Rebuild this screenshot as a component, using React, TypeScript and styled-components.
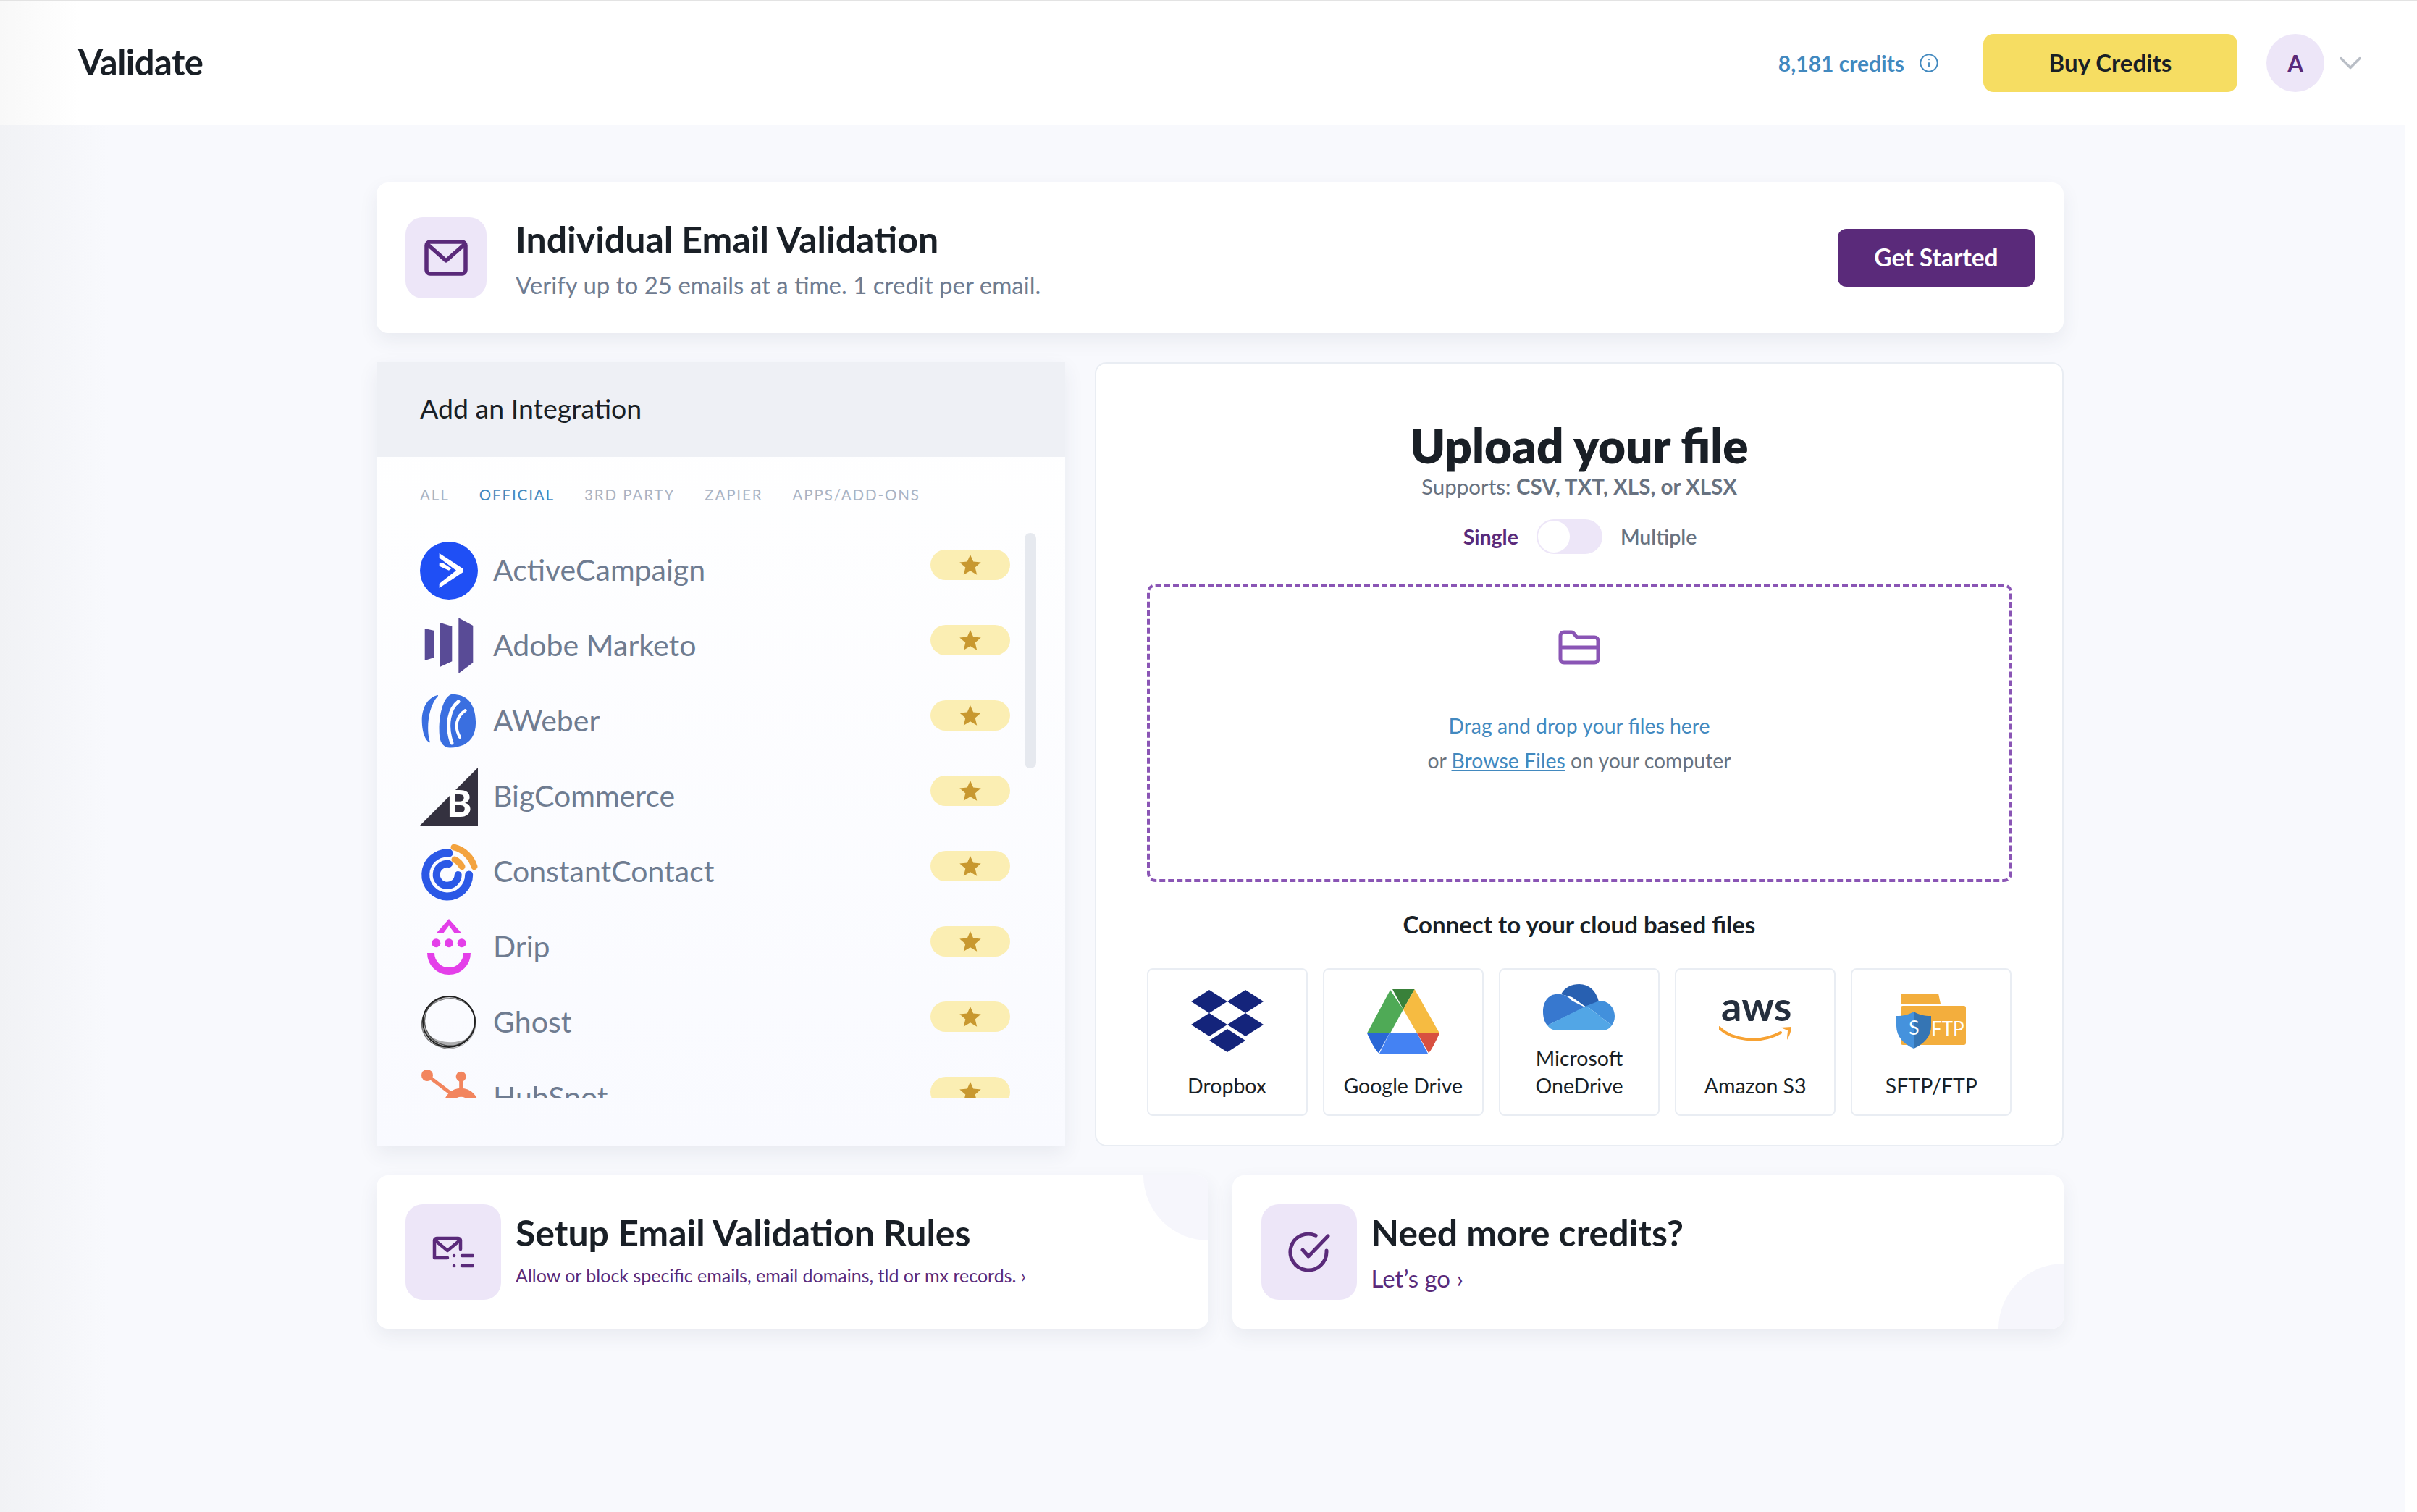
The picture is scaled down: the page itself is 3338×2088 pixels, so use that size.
import React from "react";
import styled, { createGlobalStyle } from "styled-components";
import { Info, ChevronDown } from "lucide-react";

const GlobalStyle = createGlobalStyle`
  html, body {
    margin: 0;
    padding: 0;
    background: #fff;
    font-family: "Lato", "Open Sans", sans-serif;
    color: #191f26;
  }
  * { box-sizing: border-box; }
`;

const Shell = styled.div`
  width: 3338px;
  height: 2088px;
  overflow: hidden;
  display: flex;
  flex-direction: column;
`;

const Header = styled.header`
  height: 172px;
  flex: none;
  border-top: 2px solid #e3e3e3;
  background: linear-gradient(90deg, #f8f8f8 0, #fff 110px);
  display: flex;
  align-items: center;
  padding: 0 66px 0 108px;
`;

const Brand = styled.div`
  font-size: 49px;
  font-weight: 700;
  letter-spacing: -0.5px;
  flex: 1;
  padding-bottom: 4px;
`;

const Credits = styled.div`
  display: flex;
  align-items: center;
  gap: 20px;
  color: #4289bf;
  font-size: 30px;
  font-weight: 700;
  margin-right: 61px;
  line-height: 36px;
`;

const BuyButton = styled.button`
  width: 351px;
  height: 80px;
  padding-bottom: 4px;
  border: 0;
  border-radius: 14px;
  background: #f6dd62;
  color: #191f26;
  font: 700 33px "Lato", sans-serif;
`;

const Avatar = styled.div`
  width: 80px;
  height: 80px;
  border-radius: 50%;
  margin-left: 40px;
  background: #ede6f8;
  color: #5a2a7a;
  display: flex;
  align-items: center;
  justify-content: center;
  font-size: 32px;
  font-weight: 700;
`;

const Caret = styled(ChevronDown)`
  margin-left: 10px;
  color: #b9bec6;
`;

const Main = styled.main`
  flex: 1;
  margin-right: 16px;
  padding: 80px 0 0 520px;
  background: linear-gradient(90deg, #f1f2f5 0, #f8f9fd 150px);
  display: flex;
  flex-direction: column;
  gap: 40px;
`;

const Card = styled.section`
  position: relative;
  overflow: hidden;
  background: #fff;
  border-radius: 16px;
  box-shadow: 0 10px 26px rgba(50, 60, 90, 0.08);
  display: flex;
  align-items: flex-start;
`;

const TopCard = styled(Card)`
  width: 2330px;
  height: 208px;
  padding: 48px 40px;
`;

const IconTile = styled.div<{ $size: number }>`
  width: ${(p) => p.$size}px;
  height: ${(p) => p.$size}px;
  flex: none;
  border-radius: 24px;
  background: #ede6f8;
  display: flex;
  align-items: center;
  justify-content: center;
  margin-right: ${(p) => (p.$size > 120 ? 20 : 40)}px;
`;

const CardText = styled.div<{ $top: number }>`
  flex: 1;
  margin-top: ${(p) => p.$top}px;
  position: relative;
`;

const CardTitle = styled.h2`
  margin: 0;
  font-size: 50px;
  line-height: 58px;
  font-weight: 700;
  color: #191f26;
`;

const TopSub = styled.p`
  margin: 14px 0 0;
  font-size: 33px;
  line-height: 40px;
  color: #6f7c91;
`;

const PurpleButton = styled.button`
  width: 272px;
  height: 80px;
  margin-top: 16px;
  padding-bottom: 4px;
  border: 0;
  border-radius: 12px;
  background: #5a2a7a;
  color: #fff;
  font: 700 33.500px "Lato", sans-serif;
`;

const MiddleRow = styled.div`
  display: flex;
  gap: 41px;
  width: 2330px;
  height: 1083px;
`;

const IntegrationPanel = styled.section`
  width: 951px;
  flex: none;
  background: linear-gradient(180deg, #fff 0, #f9faff 100%);
  box-shadow: 0 10px 26px rgba(50, 60, 90, 0.08);
`;

const PanelHead = styled.div`
  height: 131px;
  padding: 0 0 4px 60px;
  background: #eef0f5;
  display: flex;
  align-items: center;
  font-size: 37.500px;
  color: #191f26;
`;

const Tabs = styled.div`
  display: flex;
  gap: 41px;
  padding: 40px 0 0 60px;
  height: 64px;
  line-height: 24px;
`;

const Tab = styled.span<{ $active?: boolean }>`
  font-size: 20.500px;
  letter-spacing: 1.900px;
  color: ${(p) => (p.$active ? "#4289bf" : "#a9b3c3")};
`;

const ListWrap = styled.div`
  display: flex;
  gap: 20px;
  padding: 41px 0 0 60px;
`;

const List = styled.div`
  width: 815px;
  height: 780px;
  overflow: hidden;
`;

const Row = styled.div`
  height: 104px;
  display: flex;
  align-items: center;
  gap: 21px;
`;

const Logo = styled.svg`
  width: 80px;
  height: 80px;
  flex: none;
`;

const RowName = styled.span`
  flex: 1;
  padding-bottom: 4px;
  font-size: 41px;
  color: #6f7c91;
`;

const StarBadge = styled.div`
  width: 110px;
  height: 42px;
  margin-bottom: 16px;
  border-radius: 21px;
  background: #fbeeb3;
  display: flex;
  align-items: center;
  justify-content: center;
`;

const ScrollThumb = styled.div`
  width: 16px;
  height: 325px;
  border-radius: 8px;
  background: #e6e9ef;
`;

const UploadPanel = styled.section`
  width: 1338px;
  flex: none;
  padding-top: 78px;
  background: #fff;
  border: 2px solid #e9edf3;
  border-radius: 16px;
  display: flex;
  flex-direction: column;
  align-items: center;
`;

const UploadTitle = styled.h1`
  margin: 0;
  height: 70px;
  font-size: 65.500px;
  line-height: 70px;
  font-weight: 800;
  color: #191f26;
`;

const Supports = styled.div`
  height: 44px;
  font-size: 29.500px;
  line-height: 44px;
  color: #687280;
  b {
    font-weight: 700;
  }
`;

const ToggleRow = styled.div`
  display: flex;
  align-items: center;
  height: 48px;
  gap: 25px;
  margin-top: 23px;
  padding-left: 2px;
  font-size: 28.500px;
  line-height: 44px;
  font-weight: 600;
  color: #687280;
`;

const ActiveLabel = styled.span`
  color: #5a2a7a;
  font-weight: 700;
`;

const Toggle = styled.div`
  width: 91px;
  height: 48px;
  padding: 2px;
  border-radius: 24px;
  background: #ede6f8;
`;

const Knob = styled.div`
  width: 44px;
  height: 44px;
  border-radius: 50%;
  background: #fff;
`;

const DropZone = styled.div`
  width: 1195px;
  height: 412px;
  margin-top: 41px;
  padding-top: 60px;
  border: 4px dashed #8a55b5;
  border-radius: 12px;
  display: flex;
  flex-direction: column;
  align-items: center;
  font-size: 28.400px;
  line-height: 48px;
  color: #687280;
`;

const FolderIcon = styled.svg`
  width: 58px;
  height: 48px;
  margin-bottom: 60px;
`;

const DragLine = styled.div`
  color: #4289bf;
`;

const BrowseLink = styled.a`
  color: #4289bf;
  text-decoration: underline;
`;

const ConnectTitle = styled.div`
  margin-top: 38px;
  height: 42px;
  font-size: 33px;
  line-height: 40px;
  font-weight: 700;
  color: #191f26;
`;

const SourceGrid = styled.div`
  width: 1195px;
  margin-top: 39px;
  display: grid;
  grid-template-columns: repeat(5, 1fr);
  gap: 21px;
`;

const SourceCard = styled.div<{ $top: number }>`
  height: 204px;
  padding: ${(p) => p.$top}px 0 21px;
  border: 2px solid #e9edf3;
  border-radius: 8px;
  display: flex;
  flex-direction: column;
  align-items: center;
  justify-content: space-between;
`;

const SourceLabel = styled.div`
  font-size: 28.500px;
  line-height: 38px;
  text-align: center;
  color: #191f26;
`;

const BottomRow = styled.div`
  display: flex;
  gap: 33px;
  width: 2330px;
`;

const BottomCard = styled(Card)`
  flex: 1;
  height: 212px;
  padding: 40px;
`;

const Corner = styled.div<{ $place: "top" | "bottom" }>`
  position: absolute;
  right: -90px;
  width: 180px;
  height: 180px;
  border-radius: 50%;
  background: #f6f6fc;
  ${(p) => (p.$place === "top" ? "top: -90px;" : "bottom: -90px;")}
`;

const RuleLink = styled.p`
  margin: 12px 0 0;
  font-size: 25px;
  line-height: 36px;
  color: #5a2a7a;
`;

const GoLink = styled.p`
  margin: 14px 0 0;
  font-size: 33px;
  line-height: 40px;
  color: #5a2a7a;
`;

const Star = () => (
  <svg width="30" height="28" viewBox="0 0 30 28">
    <path
      d="M15 0l4.200 9.600 10.500.9-8 6.900 2.500 10.400L15 22.300 5.800 27.800l2.500-10.400-8-6.900 10.500-.9z"
      fill="#c8982f"
    />
  </svg>
);

const integrations: { name: string; logo: React.ReactNode }[] = [
  {
    name: "ActiveCampaign",
    logo: (
      <>
        <circle cx="40" cy="40" r="40" fill="#1f4ff5" />
        <path d="M26.700 16L59 37v5.500L26.700 64v-6L50 39.700 26.700 22.500z" fill="#fff" />
        <path d="M26.700 30.300l4-1.600L43.300 37 40 39.700 26.700 33.700z" fill="#fff" />
      </>
    ),
  },
  {
    name: "Adobe Marketo",
    logo: (
      <g fill="#594b96">
        <path d="M6.700 16L19 18.700v37.600L6.700 60z" />
        <path d="M28 8l16.300 5v48.300L28 68.700z" />
        <path d="M53.300 1.300L73.300 12v51L53.300 78z" />
      </g>
    ),
  },
  {
    name: "AWeber",
    logo: (
      <>
        <path
          d="M25 4C12 6 3 20 2.700 38c0 14 3.300 28 10.300 31 1 1 1-1 0-3C9 50 11 20 25 5z"
          fill="#3a6fe0"
        />
        <path
          d="M43 3c17-1 33 7 34 37 1 26-15 36-35 36.500C35 77 28 72 27 60 25 40 30 8 43 3z"
          fill="#3a6fe0"
        />
        <path d="M53 13c-12 9-18 32-9 57" fill="none" stroke="#fff" strokeWidth="5" strokeLinecap="round" />
        <path d="M62.700 25c-12 8-16 22-7.700 37" fill="none" stroke="#fff" strokeWidth="4" strokeLinecap="round" />
      </>
    ),
  },
  {
    name: "BigCommerce",
    logo: (
      <>
        <path d="M80 0v80H0z" fill="#34313f" />
        <text x="37" y="68" fontFamily="Lato, sans-serif" fontWeight="900" fontSize="52" fill="#fff">
          B
        </text>
      </>
    ),
  },
  {
    name: "ConstantContact",
    logo: (
      <g fill="none" strokeLinecap="round">
        <path d="M40 14A30 30 0 1 0 67.700 44" stroke="#2b58e6" strokeWidth="11" />
        <path d="M40 29A15 15 0 1 0 52.700 44" stroke="#2b58e6" strokeWidth="10" />
        <path d="M47 6A39 39 0 0 1 75 32.700" stroke="#f3a33f" strokeWidth="9" />
        <path d="M48 23A23 23 0 0 1 58 32.700" stroke="#f3a33f" strokeWidth="9" />
      </g>
    ),
  },
  {
    name: "Drip",
    logo: (
      <g fill="#e43fe9">
        <path d="M40 1l17.700 20H48l-8-10.700L32 21h-9.700z" />
        <circle cx="22.300" cy="34.300" r="6" />
        <circle cx="40" cy="34.300" r="6" />
        <circle cx="57.700" cy="34.300" r="6" />
        <path d="M15 48a25 25 0 0 0 50 0" fill="none" stroke="#e43fe9" strokeWidth="10" />
      </g>
    ),
  },
  {
    name: "Ghost",
    logo: (
      <>
        <path d="M4 32C3 54 14 72 38 77 22 68 12 60 9 50 7 44 6 38 4 32z" fill="#8a8a8a" opacity="0.5" />
        <path d="M8 54c10 18 36 26 58 8-18 8-40 8-58-8z" fill="#5f5f5f" opacity="0.5" />
        <g fill="none" stroke="#222">
          <ellipse cx="40" cy="39" rx="36" ry="35" strokeWidth="1.800" />
          <ellipse cx="41" cy="38" rx="35" ry="34" strokeWidth="1.500" transform="rotate(12 40 40)" opacity="0.7" />
          <ellipse cx="39" cy="40" rx="37" ry="33" strokeWidth="1.200" transform="rotate(-20 40 40)" opacity="0.6" />
          <ellipse cx="40" cy="41" rx="37" ry="35" strokeWidth="1" opacity="0.4" />
        </g>
      </>
    ),
  },
  {
    name: "HubSpot",
    logo: (
      <g fill="#f2855e">
        <circle cx="10" cy="9" r="8" />
        <path d="M10 9l34 26" stroke="#f2855e" strokeWidth="5" />
        <circle cx="56.700" cy="10.700" r="7" />
        <path d="M56.700 11v20" stroke="#f2855e" strokeWidth="5" />
        <circle cx="56.700" cy="50.700" r="18" fill="none" stroke="#f2855e" strokeWidth="12" />
      </g>
    ),
  },
];

const Dropbox = () => (
  <svg width="100" height="86" viewBox="0 0 100 86" fill="#14247b">
    <path d="M25 0l25 16-25 16L0 16z" />
    <path d="M75 0l25 16-25 16-25-16z" />
    <path d="M25 32l25 16-25 16L0 48z" />
    <path d="M75 32l25 16-25 16-25-16z" />
    <path d="M50 54l25 16-25 16-25-16z" />
  </svg>
);

const GoogleDrive = () => (
  <svg width="100" height="89" viewBox="0 0 100 89">
    <path d="M32 1L50 28 32 60.700H0z" fill="#4faa56" />
    <path d="M35 0h30.600L50 28z" fill="#39813a" />
    <path d="M65.600 0L100 60.700H69L50 28z" fill="#f6bb41" />
    <path d="M31 60.700h38L84 89H17z" fill="#4482f3" />
    <path d="M0 60.700h31L16 88C12 86 3 68 0 60.700z" fill="#2a67d6" />
    <path d="M69 60.700h31C97 68 88 86 85 88z" fill="#d85040" />
  </svg>
);

const OneDrive = () => (
  <svg width="100" height="64" viewBox="0 0 100 64">
    <path d="M25 14C30 4 40 0 50 0c14 0 23 9 27 24l-17 8-20-14z" fill="#2860b1" />
    <path d="M0 38C0 22 10 14 18 14c10-1 17 3 22 9l18 9L6 57c-4-4-6-11-6-19z" fill="#3778cf" />
    <path d="M60 30l18-7c12 0 21 9 21 22 0 5-2 9-4 12z" fill="#4290dc" />
    <path d="M6 57l54-27 35 27c-3 4-7 7-13 7H20c-7 0-11-3-14-7z" fill="#52a6e6" />
  </svg>
);

const Aws = () => (
  <svg width="100" height="88" viewBox="0 -28 100 88">
    <text x="3" y="30" fontFamily="Lato, sans-serif" fontWeight="700" fontSize="56" fill="#252f3e">
      aws
    </text>
    <path d="M0 39c16 16 54 24 85 7" fill="none" stroke="#f7a233" strokeWidth="4" strokeLinecap="round" />
    <path d="M85 39l15-1c0 6-3 13-6 18 0-6 1-10 1-13z" fill="#f7a233" />
  </svg>
);

const Sftp = () => (
  <svg width="97" height="77" viewBox="0 0 97 77">
    <path d="M6 3a3 3 0 0 1 3-3h49l3 14H6z" fill="#f3ae3d" />
    <rect x="6" y="17" width="90" height="54" rx="3" fill="#f3ae3d" />
    <path d="M24 25c7 4 14 6 24 6v14c0 14-10 25-24 31z" fill="#3575b4" />
    <path d="M24 25c-7 4-14 6-24 6v14c0 14 10 25 24 31z" fill="#4592dd" />
    <text x="17" y="57" fontFamily="Lato, sans-serif" fontSize="27" fill="#fff">
      S
    </text>
    <text x="48" y="58" fontFamily="Lato, sans-serif" fontSize="26" fill="#fff">
      FTP
    </text>
  </svg>
);

const sources = [
  { top: 28, art: <Dropbox />, label: "Dropbox" },
  { top: 27, art: <GoogleDrive />, label: "Google Drive" },
  {
    top: 20,
    art: <OneDrive />,
    label: (
      <>
        Microsoft
        <br />
        OneDrive
      </>
    ),
  },
  { top: 13, art: <Aws />, label: "Amazon S3" },
  { top: 33, art: <Sftp />, label: "SFTP/FTP" },
];

export default function App() {
  return (
    <Shell>
      <GlobalStyle />
      <Header>
        <Brand>Validate</Brand>
        <Credits>
          8,181 credits
          <Info size={28} strokeWidth={1.6} />
        </Credits>
        <BuyButton>Buy Credits</BuyButton>
        <Avatar>A</Avatar>
        <Caret size={52} strokeWidth={1.6} />
      </Header>
      <Main>
        <TopCard>
          <IconTile $size={112}>
            <svg width="60" height="50" viewBox="0 0 60 50" fill="none" stroke="#5a2a7a" strokeWidth="5.500" strokeLinejoin="round" strokeLinecap="round">
              <rect x="3" y="3" width="54" height="44" rx="5" />
              <path d="M4 6l26 23L56 6" />
            </svg>
          </IconTile>
          <CardText $top={1}>
            <CardTitle>Individual Email Validation</CardTitle>
            <TopSub>Verify up to 25 emails at a time. 1 credit per email.</TopSub>
          </CardText>
          <PurpleButton>Get Started</PurpleButton>
        </TopCard>

        <MiddleRow>
          <IntegrationPanel>
            <PanelHead>Add an Integration</PanelHead>
            <Tabs>
              <Tab>ALL</Tab>
              <Tab $active>OFFICIAL</Tab>
              <Tab>3RD PARTY</Tab>
              <Tab>ZAPIER</Tab>
              <Tab>APPS/ADD-ONS</Tab>
            </Tabs>
            <ListWrap>
              <List>
                {integrations.map((item) => (
                  <Row key={item.name}>
                    <Logo viewBox="0 0 80 80">{item.logo}</Logo>
                    <RowName>{item.name}</RowName>
                    <StarBadge>
                      <Star />
                    </StarBadge>
                  </Row>
                ))}
              </List>
              <ScrollThumb />
            </ListWrap>
          </IntegrationPanel>

          <UploadPanel>
            <UploadTitle>Upload your file</UploadTitle>
            <Supports>
              Supports: <b>CSV, TXT, XLS, or XLSX</b>
            </Supports>
            <ToggleRow>
              <ActiveLabel>Single</ActiveLabel>
              <Toggle>
                <Knob />
              </Toggle>
              <span>Multiple</span>
            </ToggleRow>
            <DropZone>
              <FolderIcon viewBox="0 0 58 48" fill="none" stroke="#8a55b5" strokeWidth="5" strokeLinejoin="round" strokeLinecap="round">
                <path d="M3 8c0-3 2-5 5-5h10c3 0 4 2 6 5l2 2h24c3 0 5 2 5 5v25c0 3-2 5-5 5H8c-3 0-5-2-5-5z" />
                <path d="M6 24h49" />
              </FolderIcon>
              <DragLine>Drag and drop your files here</DragLine>
              <div>
                or <BrowseLink>Browse Files</BrowseLink> on your computer
              </div>
            </DropZone>
            <ConnectTitle>Connect to your cloud based files</ConnectTitle>
            <SourceGrid>
              {sources.map((s, i) => (
                <SourceCard key={i} $top={s.top}>
                  {s.art}
                  <SourceLabel>{s.label}</SourceLabel>
                </SourceCard>
              ))}
            </SourceGrid>
          </UploadPanel>
        </MiddleRow>

        <BottomRow>
          <BottomCard>
            <Corner $place="top" />
            <IconTile $size={132}>
              <svg width="58" height="44" viewBox="0 0 58 44" fill="none" stroke="#5a2a7a" strokeWidth="4.500" strokeLinecap="round" strokeLinejoin="round">
                <path d="M3 30V6a3 3 0 0 1 3-3h30a3 3 0 0 1 3 3v12M3 30h18" />
                <path d="M4 6l17 14L38 6" />
                <path d="M30 27h.1M30 41h.1M41 27h15M41 41h15" />
              </svg>
            </IconTile>
            <CardText $top={10}>
              <CardTitle>Setup Email Validation Rules</CardTitle>
              <RuleLink>Allow or block specific emails, email domains, tld or mx records. ›</RuleLink>
            </CardText>
          </BottomCard>
          <BottomCard>
            <Corner $place="bottom" />
            <IconTile $size={132}>
              <svg width="58" height="56" viewBox="0 0 58 56" fill="none" stroke="#5a2a7a" strokeWidth="5" strokeLinecap="round" strokeLinejoin="round">
                <path d="M53 26v2a25 25 0 1 1-14.800-22.800" />
                <path d="M20 25l8 9L55 6" />
              </svg>
            </IconTile>
            <CardText $top={10}>
              <CardTitle>Need more credits?</CardTitle>
              <GoLink>Let’s go ›</GoLink>
            </CardText>
          </BottomCard>
        </BottomRow>
      </Main>
    </Shell>
  );
}
